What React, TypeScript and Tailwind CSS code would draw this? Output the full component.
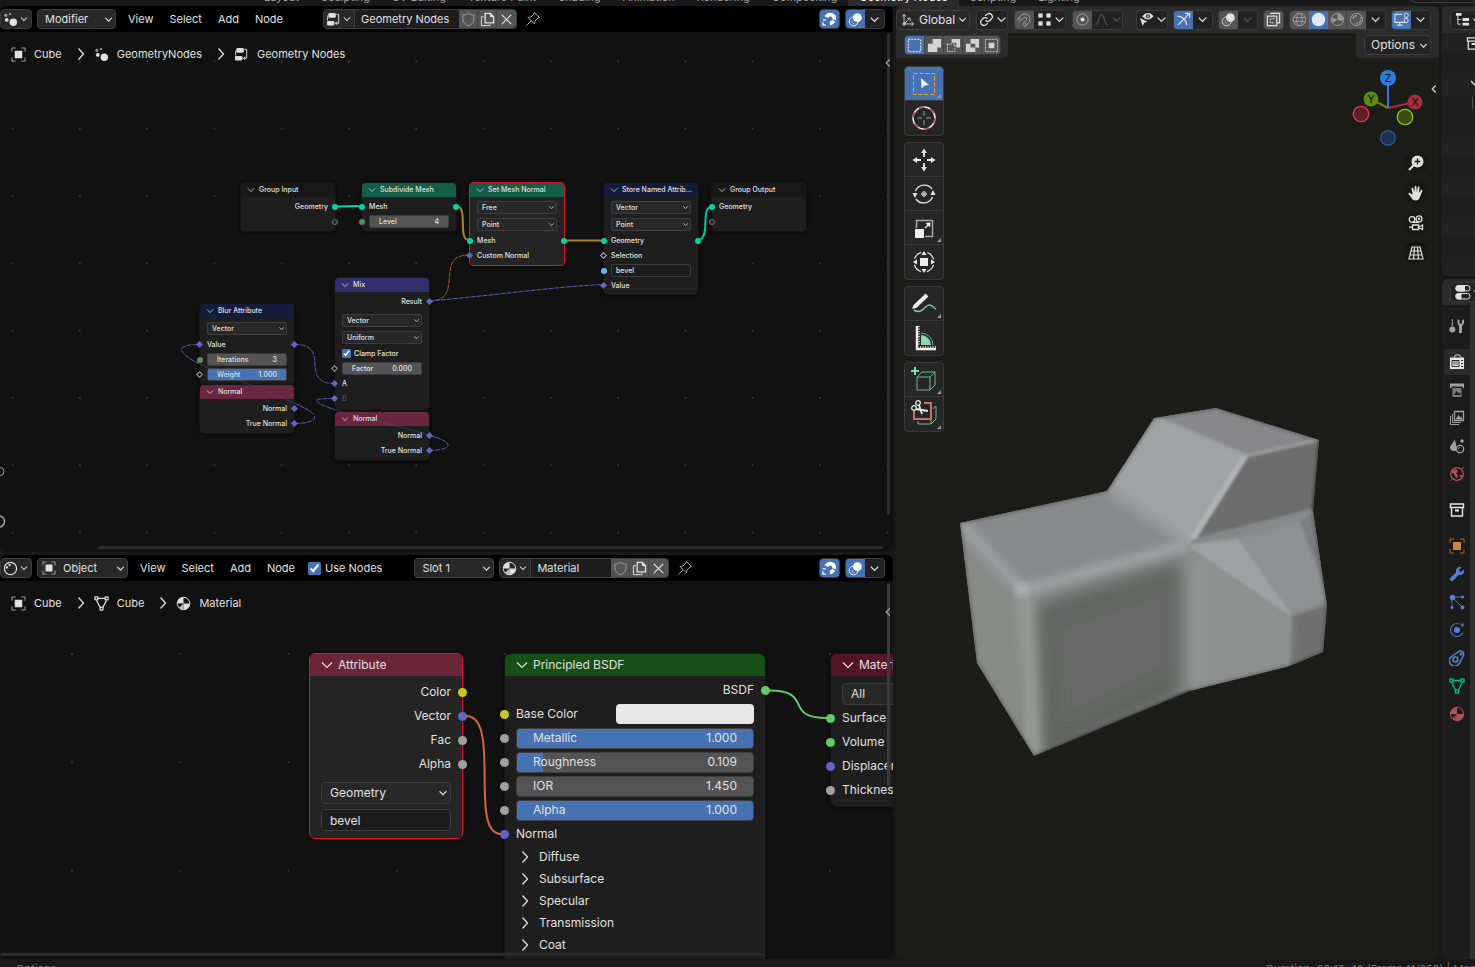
import { useState } from "react";
import clsx from "clsx";

const ICONS: Record<string, React.ReactNode> = {
  nodesMod: (
    <g fill="currentColor" stroke="none">
      <circle cx="11" cy="11" r="4" />
      <circle cx="3" cy="3.5" r="1.7" opacity="0.6" />
      <circle cx="7.5" cy="2" r="1.3" opacity="0.6" />
      <circle cx="4" cy="8.5" r="2" />
    </g>
  ),
  nodeTree: (
    <g>
      <rect x="2.5" y="1" width="8" height="5" rx="1.5" fill="currentColor" stroke="none" />
      <rect x="1" y="9.5" width="8" height="5" rx="1.5" fill="currentColor" stroke="none" />
      <path d="M2 3.5 1.5 9M11 2.5h2.5v9.5H10M12 10.5l-2 1.5 2 1.5" />
    </g>
  ),
  object: (
    <g>
      <rect x="4" y="4" width="8" height="8" fill="currentColor" stroke="none" />
      <path d="M1 5V1h4M11 1h4v4M15 11v4h-4M5 15H1v-4" opacity="0.7" />
    </g>
  ),
  meshData: (
    <g strokeWidth="1.3">
      <path d="M4 2.5h8M2.6 4.5 6.5 12M13.4 4.5 9.5 12" />
      <rect x="1" y="1" width="3" height="3" />
      <rect x="12" y="1" width="3" height="3" />
      <rect x="6.5" y="12" width="3" height="3" />
    </g>
  ),
  material: (
    <g>
      <circle cx="8" cy="8" r="6.7" />
      <path d="M8 8V1.3A6.7 6.7 0 0 0 1.3 8ZM8 8v6.7A6.7 6.7 0 0 0 14.7 8Z" fill="currentColor" stroke="none" />
      <path d="M8 14.7A6.7 6.7 0 0 1 3 12.5L8 8Z" fill="currentColor" stroke="none" opacity="0.8" />
    </g>
  ),
  shaderBall: (
    <g>
      <circle cx="8" cy="8" r="6.5" strokeWidth="1.3" />
      <path d="M4 8a4 4 0 0 1 .8-2.300M6 4.600 8 4" strokeWidth="2" />
    </g>
  ),
  shield: <path d="M8 1.500c2 1.300 4 1.700 6 1.700v4c0 4-3 6.200-6 7.500C5 13.400 2 11.200 2 7.200v-4c2 0 4-.4 6-1.700Z" />,
  copy: (
    <g>
      <path d="M5.500 1.500h5.500l3.500 3.500v6.500h-9Z" strokeWidth="1.4" />
      <path d="M11 1.500v3.500h3.500Z" fill="currentColor" />
      <path d="M4 5H1.500v9.500h9V13" />
    </g>
  ),
  close: <path d="m3 3 10 10M13 3 3 13" strokeWidth="1.3" />,
  pin: <path d="m9.500 1.500 5 5-1.500.5-3 3-.5 3L3 6.500l3-.5 3-3ZM6 10l-4.500 4.500" />,
  magnet: (
    <g>
      <path d="M4.500 5.500C7 1 13.500 2.500 13 7.500c-.3 3-3 5-6 5" strokeWidth="4" strokeDasharray="13 1.200 5" />
      <path d="M1 8.500h3M1 11v3h3" strokeWidth="1.3" />
    </g>
  ),
  overlay: (
    <g>
      <circle cx="10" cy="6" r="4.7" fill="currentColor" stroke="none" />
      <circle cx="6" cy="10" r="4.7" />
      <path d="M4 9a4 4 0 0 0 3 4" opacity="0.6" />
    </g>
  ),
  down: <path d="m4 6 4 4 4-4" strokeWidth="1.4" />,
  expand: <path d="m3 5.500 5 5 5-5" strokeWidth="1.2" />,
  right: <path d="m5.500 2.500 5 5.500-5 5.500" strokeWidth="1.3" />,
  axes: (
    <g>
      <path d="M3.500 2v10.500H14M3.500 12.500 9 7" />
      <path d="M1.500 4 3.500 1.500 5.500 4M12 10.500l2.500 2-2.500 2M7 6h3.500v3.500" />
      <circle cx="3.5" cy="12.5" r="1.5" />
    </g>
  ),
  link: (
    <g strokeWidth="1.4">
      <path d="M6.500 4 9 2.200a3.400 3.400 0 0 1 4.700 4.700l-2 2.200a3.300 3.300 0 0 1-4.700 0" />
      <path d="M9.500 12 7 13.800a3.400 3.400 0 0 1-4.700-4.700l2-2.200a3.300 3.300 0 0 1 4.700 0" />
    </g>
  ),
  magnetOff: (
    <g transform="rotate(45 8 8)">
      <path d="M2.500 13V7.500a5.500 5.500 0 0 1 11 0V13h-3.500V7.500a2 2 0 0 0-4 0V13ZM2.500 10.500H6M10 10.500h3.500" />
    </g>
  ),
  snapGrid: (
    <g fill="currentColor" stroke="none">
      <rect x="1.5" y="1.5" width="4.5" height="4.5" />
      <rect x="10" y="1.5" width="4.5" height="4.5" />
      <rect x="1.5" y="10" width="4.5" height="4.5" />
      <rect x="10" y="10" width="4.5" height="4.5" />
    </g>
  ),
  proportional: (
    <g>
      <circle cx="8" cy="8" r="6" opacity="0.6" />
      <circle cx="8" cy="8" r="2.2" fill="currentColor" stroke="none" />
    </g>
  ),
  falloff: <path d="M1.500 13.500c4 0 3.500-11 6.500-11s2.500 11 6.500 11" strokeWidth="1.3" />,
  eye: (
    <g>
      <path d="M4 4.500c3-4 8-4 11 0-3 4-8 4-11 0Z" fill="currentColor" />
      <circle cx="9.5" cy="4.5" r="2.2" fill="#222" stroke="none" />
      <circle cx="9.5" cy="4.5" r="1" fill="currentColor" stroke="none" />
      <path d="m1 6.500 8 4-3.500 1L4 15Z" fill="currentColor" stroke="none" />
    </g>
  ),
  gizmo: <path d="M1.500 4.500C7 4.500 11.500 9 11.500 14.500M2 14 14 2M9.500 1.500h5v5" strokeWidth="1.3" />,
  xray: (
    <g>
      <path d="M4.500 1.500h10v10h-3M1.500 4.500h10v10h-10Z" strokeWidth="1.3" />
      <path d="M4.500 7v4.500h4M8.500 7.500v-.500h-3" strokeDasharray="2 1" />
    </g>
  ),
  wire: (
    <g>
      <circle cx="8" cy="8" r="6.7" />
      <ellipse cx="8" cy="8" rx="3" ry="6.7" />
      <path d="M2 5.500c3 1 9 1 12 0M2 10.500c3-1 9-1 12 0" />
    </g>
  ),
  solid: <circle cx="8" cy="8" r="7.2" fill="currentColor" stroke="none" />,
  preview: (
    <g>
      <circle cx="8" cy="8" r="6.5" />
      <path d="M8 8V2a6 6 0 0 1 6 6c-1 2-4 2-6 0ZM8 8l-5 3.500A6 6 0 0 1 2.500 6Z" fill="currentColor" stroke="none" opacity="0.9" />
    </g>
  ),
  rendered: (
    <g>
      <circle cx="8" cy="8" r="6.5" />
      <path d="M4.500 7.500a4 4 0 0 1 4-3.500" strokeWidth="1.5" />
      <path d="M12.500 6c1 4-2 7-6 6.500" strokeDasharray="1.500 1" strokeWidth="2" />
    </g>
  ),
  display: (
    <g>
      <path d="M8.500 2.500H1v8.500h10V9M6 11v3M3 14h6" strokeWidth="1.2" />
      <rect x="11" y="1" width="4" height="5" rx="2" />
      <rect x="11" y="6.5" width="4" height="5" rx="2" />
    </g>
  ),
  outliner: (
    <g>
      <path d="M3 3v10h3M3 8h3" />
      <path d="M1 1h6v3H1ZM8 6.500h7v3H8ZM8 11.500h7v3H8Z" fill="currentColor" stroke="none" />
    </g>
  ),
  props: (
    <g>
      <rect x="1" y="1.5" width="14" height="5.5" rx="2.5" />
      <rect x="1" y="9.5" width="14" height="5.5" rx="2.5" />
      <path d="M3.500 1.500h6v5.500h-6a2.700 2.700 0 0 1 0-5.500ZM3.500 9.500h2.500v5.500h-2.500a2.700 2.700 0 0 1 0-5.500Z" fill="currentColor" />
    </g>
  ),
  collection: (
    <g>
      <path d="M1.500 2h13v3.500h-13ZM2.500 5.500v8.500h11V5.500" strokeWidth="1.4" />
      <path d="M6 8.500h4" strokeWidth="2" />
    </g>
  ),
  tools: (
    <g fill="currentColor" stroke="none">
      <path d="M2.800 1h1v7h-1Z" />
      <circle cx="3.3" cy="11.5" r="3" />
      <path d="M8.500 1v3.500c0 2 1.500 3 1.500 4V15h3V8.500c0-1 2-2 2-4V1l-2 1.500v3h-2.500v-3Z" />
    </g>
  ),
  render: (
    <g>
      <path d="M5 3.500 6.500 1h4L12 3.500" />
      <path d="M1 3.500h14V15H1Z" fill="currentColor" stroke="none" />
      <path d="M3 6.500h7v6H3Z" stroke="#2b2b2b" />
      <path d="M4 8h5M4 10h5" stroke="#2b2b2b" strokeWidth="0.8" />
      <path d="M12 6.500h2M12 9.500h2M12 12.500h2" stroke="#2b2b2b" />
    </g>
  ),
  output: (
    <g fill="currentColor" stroke="none">
      <path d="M1 1.500h14V6h-1.500V4.500h-11V6H1Z" />
      <path d="M3.500 6h9v9h-9Z" opacity="0.7" />
      <path d="m5 13 2.500-4 2 2.500 1-1L12 13Z" fill="#1c1c1c" />
    </g>
  ),
  viewLayer: (
    <g>
      <path d="M5.500 1.500h9v9h-9Z" strokeWidth="1.3" />
      <path d="m6.500 9.500 3-4.500 2 2.500 1-1 1 3Z" fill="currentColor" stroke="none" />
      <path d="M3.500 4v8.500H12M1.500 6v8.500H10" />
    </g>
  ),
  scene: (
    <g>
      <path d="M5.500 1c0 3-4.500 6-4.500 9 0 4 9 4 7 0-.5-2-1-2-1-4Z" fill="currentColor" stroke="none" />
      <circle cx="11" cy="11" r="3.7" fill="#1c1c1c" strokeWidth="1.3" />
      <circle cx="13" cy="3" r="1.8" fill="currentColor" stroke="none" />
      <path d="M9.500 11a1.500 1.500 0 0 1 1.500-1.500" />
    </g>
  ),
  world: (
    <g>
      <circle cx="8" cy="8" r="6.3" strokeWidth="1.3" />
      <path d="M3 4.500 7 3l2 2-2 2.500 2 1.500-1 3.500-2-2-1-3-3-1ZM10.500 9l3 0-2 3Z" fill="currentColor" stroke="none" />
      <path d="M12.500 3.500 15 1M3.500 12.500 1 15" />
    </g>
  ),
  wrench: (
    <path
      d="M14.800 3.500 12 6.300 9.700 4 12.500 1.200C9 0 6 3 7.200 6.400L1.200 12a2 2 0 0 0 2.800 2.800l5.800-6C13 10 16 7 14.800 3.500Z"
      fill="currentColor"
      stroke="none"
    />
  ),
  particles: (
    <g>
      <path d="M4 3h10M3 4v9M5 5l8 8" opacity="0.8" />
      <g fill="currentColor" stroke="none">
        <circle cx="3.5" cy="3.5" r="2.8" />
        <circle cx="13.5" cy="3" r="1.5" />
        <circle cx="3" cy="13.5" r="1.5" />
        <circle cx="13.5" cy="13.5" r="1.9" />
      </g>
    </g>
  ),
  physics: (
    <g>
      <circle cx="8" cy="8" r="3" fill="currentColor" stroke="none" />
      <path d="M10.500 2A6.500 6.500 0 1 0 14 10.500" opacity="0.8" strokeWidth="1.2" />
      <circle cx="13.5" cy="3" r="1.8" fill="currentColor" stroke="none" opacity="0.7" />
    </g>
  ),
  constraint: (
    <g strokeWidth="1.5">
      <circle cx="6.5" cy="9.5" r="2.5" />
      <path d="M2 7 9 2c4-2.500 7 1 5 4.500l-3.500 6.500A5.300 5.300 0 1 1 2 7Z" />
      <circle cx="12" cy="4" r="0.8" fill="currentColor" />
    </g>
  ),
  zoom: (
    <g>
      <circle cx="9.5" cy="6.5" r="6" fill="currentColor" stroke="none" />
      <path d="m1 15 5-5" strokeWidth="2.2" />
      <path d="M9.500 3.500v6M6.500 6.500h6" stroke="#171714" strokeWidth="1.3" />
    </g>
  ),
  hand: (
    <path
      d="M4.500 8.500 3.500 3.700c-.2-1.200 1.300-1.500 1.700-.4L6.500 7 6.700 1.800c0-1.300 1.700-1.300 1.800 0L8.800 7l1-4.700c.3-1.200 1.800-.9 1.700.3L11 8l1.700-2.700c.7-1 2-.3 1.600.8L12 12c-1 2.500-2 3.500-4.500 3.500S4 14 3.300 12.500L.7 9.300c-.8-1 .5-2.200 1.500-1.300L4 9.800Z"
      fill="currentColor"
      stroke="none"
    />
  ),
  camera: (
    <g strokeWidth="1.3">
      <circle cx="4" cy="4.5" r="2.8" />
      <circle cx="11" cy="3.8" r="3" />
      <circle cx="11" cy="3.8" r="0.6" fill="currentColor" />
      <path d="M4 7.300h7" />
      <path d="M4.500 10h6v4.500h-6ZM10.500 12l4-2v4.500l-4-2M1 12.200h3.500" />
    </g>
  ),
  gridView: <path d="M4 2h8l3 12H1ZM3 6h10M2 10h12M6.500 2 5.500 14M9.500 2l1 12" strokeWidth="1.2" />,
  selNew: <path d="M1.500 1.500h13v13h-13Z" strokeDasharray="2 1.250" strokeWidth="1.4" />,
  selAdd: <path d="M6 1h9v9h-4v5H1V6h5Z" fill="currentColor" stroke="none" />,
  selSub: (
    <g>
      <path d="M6 1h9v9h-4V5H6Z" fill="currentColor" stroke="none" />
      <path d="M1.500 6.500h8v8h-8Z" strokeDasharray="2 1" />
    </g>
  ),
  selXor: <path fillRule="evenodd" d="M6 1h9v9h-4v5H1V6h5ZM6 6h5v4H6Z" fill="currentColor" stroke="none" />,
  selAnd: (
    <g>
      <path d="M5 5h6v6H5Z" fill="currentColor" stroke="none" />
      <path d="M1.500 1.500h13v13h-13Z" strokeDasharray="2 1.250" />
    </g>
  ),
};

function Icon({ name, className = "size-4" }: { name: string; className?: string }) {
  return (
    <svg viewBox="0 0 16 16" className={clsx("shrink-0", className)} fill="none" stroke="currentColor" strokeWidth="1" aria-hidden="true">
      {ICONS[name]}
    </svg>
  );
}

function Btn({ icon, label, className }: { icon: string; label: string; className?: string }) {
  return (
    <button aria-label={label} className={clsx("flex h-full w-[19px] items-center justify-center", className)}>
      <Icon name={icon} className="size-[15px]" />
    </button>
  );
}

function Group({ children, className }: { children: React.ReactNode; className?: string }) {
  return (
    <div className={clsx("flex h-5 shrink-0 items-center overflow-hidden rounded border border-[#3a3a3a] bg-[#222]", className)}>
      {children}
    </div>
  );
}

function HeaderSelect({ label, options, icon, className }: { label: string; options: string[]; icon?: string; className?: string }) {
  return (
    <div className={clsx("relative flex h-5 shrink-0 items-center rounded border border-[#3d3d3d] bg-[#282828]", className)}>
      {icon && <Icon name={icon} className="ml-1 size-[14px]" />}
      <select aria-label={label} className={clsx("h-full min-w-0 flex-1 appearance-none bg-transparent outline-none", icon === "axes" ? "pl-1" : "pl-[7px]")}>
        {options.map((o) => (
          <option key={o}>{o}</option>
        ))}
      </select>
      <Icon name="down" className="pointer-events-none absolute right-0 size-[13px]" />
    </div>
  );
}

function Menus() {
  return (
    <nav className="flex gap-4">
      {["View", "Select", "Add", "Node"].map((m) => (
        <button key={m}>{m}</button>
      ))}
    </nav>
  );
}

function EditorType({ icon }: { icon: string }) {
  return (
    <button aria-label="Editor type" className="flex h-5 w-8 shrink-0 items-center justify-center rounded border border-[#3a3a3a] bg-[#282828]">
      <Icon name={icon} className="size-[15px]" />
      <Icon name="down" className="size-3" />
    </button>
  );
}

function DataBlock({ icon, name, width }: { icon: string; name: string; width: string }) {
  return (
    <div className="flex items-center gap-2">
      <Group className="border-[#3d3d3d]">
        <button aria-label="Browse" className="flex h-full w-[31px] items-center justify-center border-r border-[#3d3d3d] bg-[#282828]">
          <Icon name={icon} className="size-[15px]" />
          <Icon name="down" className="size-3" />
        </button>
        <input aria-label="Name" defaultValue={name} className={clsx("h-full bg-[#1d1d1d] px-[6px] outline-none", width)} />
        <Btn icon="shield" label="Fake user" className="border-r border-[#444] bg-[#545454] text-neutral-400" />
        <Btn icon="copy" label="Duplicate" className="border-r border-[#444] bg-[#545454]" />
        <Btn icon="close" label="Unlink" className="bg-[#545454]" />
      </Group>
      <button aria-label="Pin" className="text-neutral-400">
        <Icon name="pin" className="size-4" />
      </button>
    </div>
  );
}

function HeaderToggles() {
  return (
    <div className="ml-auto flex gap-[5px] pr-[8px]">
      <Group>
        <Btn icon="magnet" label="Snap" className="bg-[#4772b3] text-white" />
      </Group>
      <Group>
        <Btn icon="overlay" label="Overlays" className="bg-[#4772b3] text-white" />
        <Btn icon="down" label="Overlay options" />
      </Group>
    </div>
  );
}

function Crumbs({ items }: { items: { icon: string; text: string }[] }) {
  return (
    <nav className="relative flex h-11 items-center px-[11px] text-[11px]">
      {items.map((it, i) => (
        <div key={i} className="flex items-center">
          {i > 0 && <Icon name="right" className="mr-[5px] ml-[11px] size-4" />}
          <Icon name={it.icon} className="size-[15px]" />
          <a href="#" className="ml-2">
            {it.text}
          </a>
        </div>
      ))}
    </nav>
  );
}

// ---- nodes ----

type NodeProps = {
  title: string;
  head: string;
  className: string;
  big?: boolean;
  selected?: boolean;
  children: React.ReactNode;
};

function NodeCard({ title, head, className, big, selected, children }: NodeProps) {
  return (
    <section
      className={clsx(
        "absolute shadow-[0_1px_4px_#000] outline-1",
        big ? "rounded-[5px] text-xs" : "rounded-[3px] text-[7px] font-medium",
        selected ? "bg-[#242424] outline-[#e0112b]" : "bg-[#1e1e1e] outline-[#141414]",
        className
      )}
    >
      <h3
        className={clsx(
          "flex items-center whitespace-nowrap",
          big ? "h-[22px] gap-[3px] rounded-t-[5px] pl-[9px]" : "h-[14px] gap-[3px] rounded-t-[3px] pl-[5px]",
          head
        )}
      >
        <Icon name="expand" className={big ? "size-4" : "size-[10px]"} />
        {title}
      </h3>
      {children}
    </section>
  );
}

type RowProps = {
  left?: string;
  right?: string;
  leftDiamond?: boolean;
  rightDiamond?: boolean;
  big?: boolean;
  align?: "left" | "right";
  drop?: boolean;
  children?: React.ReactNode;
};

function Row({ left, right, leftDiamond, rightDiamond, big, align = "left", drop, children }: RowProps) {
  const dot = big ? "size-[9px] rounded-full" : "size-[6px] rounded-full";
  const diamond = "size-[5px] rotate-45";
  return (
    <div
      className={clsx(
        "relative flex items-center",
        big ? "h-6 px-[11px]" : drop ? "h-[17px] px-[7px]" : "h-[15px] px-[7px]",
        align === "right" && "justify-end"
      )}
    >
      {left && <i className={clsx("absolute", big ? "-left-[5px]" : "-left-[3px]", leftDiamond ? diamond : dot, left)} />}
      {children}
      {right && <i className={clsx("absolute", big ? "-right-[5px]" : "-right-[3px]", rightDiamond ? diamond : dot, right)} />}
    </div>
  );
}

function NodeSelect({ options, big }: { options: string[]; big?: boolean }) {
  return (
    <div className={clsx("relative flex w-full items-center border border-[#3d3d3d] bg-[#282828]", big ? "h-[22px] rounded" : "h-[13px] rounded-[2px]")}>
      <select aria-label={options[0]} className={clsx("h-full w-full appearance-none bg-transparent outline-none", big ? "pl-2" : "pl-1")}>
        {options.map((o) => (
          <option key={o}>{o}</option>
        ))}
      </select>
      <Icon name="down" className={clsx("pointer-events-none absolute right-0", big ? "size-[14px]" : "size-[9px]")} />
    </div>
  );
}

function NumField({ label, value, fill = 0, big }: { label: string; value: string; fill?: number; big?: boolean }) {
  return (
    <label className={clsx("relative flex w-full items-center overflow-hidden bg-[#545454]", big ? "h-[21px] rounded border border-[#3d3d3d] px-4" : "h-[13px] rounded-[2px] border border-[#3d3d3d] px-[9px]")}>
      <span className="absolute inset-y-0 left-0 bg-[#4772b3]" style={{ width: `${fill}%` }} />
      <span className="relative">{label}</span>
      <input defaultValue={value} className="relative w-0 min-w-0 flex-1 bg-transparent text-right outline-none" />
    </label>
  );
}

const TEAL = "bg-[#00d6a3]";
const PURPLE = "bg-[#6363c7]";
const GREY = "bg-[#a1a1a1]";
const GREEN = "bg-[#63c763]";

function Dots({ id, step, x, y }: { id: string; step: number; x: number; y: number }) {
  return (
    <svg className="absolute inset-0 size-full" aria-hidden="true">
      <pattern id={id} width={step} height={step} x={x} y={y} patternUnits="userSpaceOnUse">
        <circle cx="1" cy="1" r="1" fill="#22406e" />
      </pattern>
      <rect width="100%" height="100%" fill={`url(#${id})`} />
    </svg>
  );
}

function GeometryCanvas() {
  return (
    <div className="relative min-h-0 flex-1 overflow-hidden bg-[#111]">
      <Dots id="geoDots" step={67.3} x={11.5} y={28.5} />
      <Crumbs
        items={[
          { icon: "object", text: "Cube" },
          { icon: "nodesMod", text: "GeometryNodes" },
          { icon: "nodeTree", text: "Geometry Nodes" },
        ]}
      />
      <svg className="absolute top-0 left-0 h-[520px] w-[890px]" viewBox="0 32 890 520" fill="none" aria-hidden="true">
        <path d="M335 206.500L362 206" stroke="#00d6a3" strokeWidth="2" />
        <path d="M456 206C469 206 457 240 469 240" stroke="#a8842c" strokeWidth="2" />
        <path d="M564 240.500H604" stroke="#a8842c" strokeWidth="2" />
        <path d="M698 240C711 240 700 206.500 712 206.500" stroke="#00c89a" strokeWidth="2" />
        <path d="M429 301C466 301 433 255 469 255" stroke="#b0593a" strokeDasharray="5 1" />
        <g stroke="#5c5cb8" strokeDasharray="5 1">
          <path d="M429 301C480 297 560 286 604 284.500" />
          <path d="M295 344.500C332 344.500 298 383.500 335 383.500" />
          <path d="M295 423.500C312 423.500 322 418 308 410C295 401 200 366 192 360C178 351 176 344.500 200 344.500" />
          <path d="M429 450.500C446 450.500 456 445 440 439C425 432 345 414 330 408C310 400 312 398.500 335 398.500" />
        </g>
        <g stroke="#a0a0a0">
          <circle cx="0" cy="471.5" r="4" />
          <circle cx="-1" cy="521.5" r="5.5" strokeWidth="1.5" />
        </g>
      </svg>

      <NodeCard title="Group Input" head="bg-[#181818]" className="top-[151px] left-[241px] w-[94px] pb-0.5">
        <div className="pt-0.5">
          <Row align="right" right={TEAL}>Geometry</Row>
          <Row right="border border-[#777] bg-[#222]" />
        </div>
      </NodeCard>
      <NodeCard title="Subdivide Mesh" head="bg-[#135d49]" className="top-[151px] left-[362px] w-[94px] pb-0.5">
        <div className="pt-0.5">
          <Row left={TEAL} right={TEAL}>Mesh</Row>
          <Row left="bg-[#598c5c]"><NumField label="Level" value="4" /></Row>
        </div>
      </NodeCard>
      <NodeCard selected title="Set Mesh Normal" head="bg-[#135d49]" className="top-[151px] left-[470px] w-[94px] pb-0.5">
        <div className="pt-0.5">
          <Row drop><NodeSelect options={["Free", "Sharpness"]} /></Row>
          <Row drop><NodeSelect options={["Point", "Face"]} /></Row>
          <Row left={TEAL} right={TEAL}>Mesh</Row>
          <Row left={PURPLE} leftDiamond>Custom Normal</Row>
        </div>
      </NodeCard>
      <NodeCard title="Store Named Attrib..." head="bg-[#141c3c]" className="top-[151px] left-[604px] w-[94px] pb-px">
        <div className="pt-0.5">
          <Row drop><NodeSelect options={["Vector", "Float"]} /></Row>
          <Row drop><NodeSelect options={["Point", "Face"]} /></Row>
          <Row left={TEAL} right={TEAL}>Geometry</Row>
          <Row left="border border-[#cca6d6] bg-[#111]" leftDiamond>Selection</Row>
          <Row left="bg-[#70b2ff]">
            <input aria-label="Attribute name" defaultValue="bevel" className="h-[13px] w-full rounded-[2px] border border-[#3d3d3d] bg-[#1d1d1d] px-1 outline-none" />
          </Row>
          <Row left={PURPLE} leftDiamond>Value</Row>
        </div>
      </NodeCard>
      <NodeCard title="Group Output" head="bg-[#181818]" className="top-[151px] left-[712px] w-[94px] pb-0.5">
        <div className="pt-0.5">
          <Row left={TEAL}>Geometry</Row>
          <Row left="border border-[#777] bg-[#222]" />
        </div>
      </NodeCard>
      <NodeCard title="Mix" head="bg-[#2f2f6b]" className="top-[246px] left-[335px] w-[94px] pb-1">
        <div className="pt-0.5">
          <Row align="right" right={PURPLE} rightDiamond>Result</Row>
          <div className="pt-[3px]">
            <Row drop><NodeSelect options={["Vector", "Float"]} /></Row>
            <Row drop><NodeSelect options={["Uniform", "Non-Uniform"]} /></Row>
          </div>
          <Row>
            <label className="flex items-center gap-[3px]">
              <input type="checkbox" defaultChecked className="size-[9px] accent-[#4772b3]" />
              Clamp Factor
            </label>
          </Row>
          <Row left="border border-[#a1a1a1] bg-[#111]" leftDiamond><NumField label="Factor" value="0.000" /></Row>
          <Row left={PURPLE} leftDiamond>A</Row>
          <Row left={PURPLE} leftDiamond><span className="text-neutral-600">B</span></Row>
        </div>
      </NodeCard>
      <NodeCard title="Normal" head="bg-[#6a2540]" className="top-[380px] left-[335px] w-[94px] pb-0.5">
        <div className="pt-0.5">
          <Row align="right" right={PURPLE} rightDiamond>Normal</Row>
          <Row align="right" right={PURPLE} rightDiamond>True Normal</Row>
        </div>
      </NodeCard>
      <NodeCard title="Blur Attribute" head="bg-[#141c3c]" className="top-[272px] left-[200px] w-[94px] pb-0.5">
        <div className="pt-0.5">
          <Row drop><NodeSelect options={["Vector", "Float"]} /></Row>
          <Row left={PURPLE} leftDiamond right={PURPLE} rightDiamond>Value</Row>
          <Row left="bg-[#598c5c]"><NumField label="Iterations" value="3" /></Row>
          <Row left="border border-[#a1a1a1] bg-[#111]" leftDiamond><NumField label="Weight" value="1.000" fill={100} /></Row>
        </div>
      </NodeCard>
      <NodeCard title="Normal" head="bg-[#6a2540]" className="top-[353px] left-[200px] w-[94px] pb-0.5">
        <div className="pt-0.5">
          <Row align="right" right={PURPLE} rightDiamond>Normal</Row>
          <Row align="right" right={PURPLE} rightDiamond>True Normal</Row>
        </div>
      </NodeCard>
      {/* wires showing faintly through the nodes they cross */}
      <svg
        className="pointer-events-none absolute top-0 left-0 h-[520px] w-[890px]"
        viewBox="0 32 890 520"
        fill="none"
        stroke="#5c5cb8"
        opacity="0.3"
        aria-hidden="true"
      >
        <path d="M308 410C295 401 200 366 192 360M440 439C425 432 345 414 330 408" />
      </svg>

      <div className="absolute top-px right-[3px] h-[482px] w-[3px] rounded bg-[#2c2c2c]" />
      <div className="absolute right-[10px] bottom-[3px] left-[98px] h-[3px] rounded bg-[#2c2c2c]" />
      <Icon name="down" className="absolute top-6 -right-0.5 size-[14px] rotate-90 text-neutral-400" />
    </div>
  );
}

const PANELS = ["Diffuse", "Subsurface", "Specular", "Transmission", "Coat"];

function ShaderCanvas() {
  return (
    <div className="relative min-h-0 flex-1 overflow-hidden bg-[#111]">
      <Dots id="shaderDots" step={108.3} x={71} y={72} />
      <Crumbs
        items={[
          { icon: "object", text: "Cube" },
          { icon: "meshData", text: "Cube" },
          { icon: "material", text: "Material" },
        ]}
      />
      <NodeCard big selected title="Attribute" head="bg-[#6b2539]" className="top-[73px] left-[310px] w-[152px] pb-[5px]">
        <div className="pt-1">
          <Row big align="right" right="bg-[#c7c729]">Color</Row>
          <Row big align="right" right={PURPLE}>Vector</Row>
          <Row big align="right" right={GREY}>Fac</Row>
          <Row big align="right" right={GREY}>Alpha</Row>
        </div>
        <div className="flex flex-col gap-[5px] px-[11px] pt-1.5 pb-0.5">
          <NodeSelect big options={["Geometry", "Object"]} />
          <input aria-label="Attribute name" defaultValue="bevel" className="h-[22px] rounded border border-[#3d3d3d] bg-[#1d1d1d] px-2 outline-none" />
        </div>
      </NodeCard>
      <NodeCard big title="Principled BSDF" head="bg-[#154f15]" className="top-[73px] left-[505px] w-[260px] pb-10">
        <div className="pt-0.5">
          <Row big align="right" right={GREEN}>BSDF</Row>
          <Row big left="bg-[#c7c729]">
            <span className="flex-1">Base Color</span>
            <button aria-label="Base Color" className="h-5 w-[138px] rounded bg-[#e7e7e7]" />
          </Row>
          <Row big left={GREY}><NumField big label="Metallic" value="1.000" fill={100} /></Row>
          <Row big left={GREY}><NumField big label="Roughness" value="0.109" fill={10.9} /></Row>
          <Row big left={GREY}><NumField big label="IOR" value="1.450" /></Row>
          <Row big left={GREY}><NumField big label="Alpha" value="1.000" fill={100} /></Row>
          <Row big left={PURPLE}>Normal</Row>
        </div>
        {PANELS.map((p) => (
          <button key={p} className="flex h-[22px] w-full items-center gap-[6px] pl-3">
            <Icon name="right" className="size-4" />
            {p}
          </button>
        ))}
      </NodeCard>
      <NodeCard big title="Material Output" head="bg-[#531524]" className="top-[73px] left-[831px] w-[150px] pb-1">
        <div className="pt-[6px]">
          <Row big><NodeSelect big options={["All", "Eevee", "Cycles"]} /></Row>
          <Row big left={GREEN}>Surface</Row>
          <Row big left={GREEN}>Volume</Row>
          <Row big left={PURPLE}>Displacement</Row>
          <Row big left={GREY}>Thickness</Row>
        </div>
      </NodeCard>
      <svg
        className="pointer-events-none absolute top-0 left-0 h-[380px] w-[890px]"
        viewBox="0 581 890 380"
        fill="none"
        strokeWidth="2"
        aria-hidden="true"
      >
        <path d="M466 716C502 716 468 834 501 834" stroke="#cc6a3e" />
        <path d="M769 690.500C815 690.500 782 718 827 718" stroke="#63c763" />
      </svg>
      <div className="absolute top-0.5 right-[3px] h-[203px] w-[3px] rounded bg-[#3a3a3a]" />
      <div className="absolute right-[128px] bottom-[3px] left-0 h-[3px] rounded bg-[#2c2c2c]" />
      <Icon name="down" className="absolute top-6 -right-0.5 size-[14px] rotate-90 text-neutral-400" />
    </div>
  );
}

// ---- 3D viewport ----

const SILHOUETTE = "1154,418 1216,408 1319,440 1313,511 1327,606 1323,652 1287,667 1190,691 1034,756 977,663 960,523 1107,491";

function BevelMesh() {
  return (
    <svg className="absolute top-[396px] left-[59px] h-[356px] w-[376px]" viewBox="955 402 376 356" role="img" aria-label="Bevelled cube mesh">
      <defs>
        <clipPath id="meshClip">
          <polygon points={SILHOUETTE} />
        </clipPath>
        <filter id="soft" x="-20%" y="-20%" width="140%" height="140%">
          <feGaussianBlur stdDeviation="5" />
        </filter>
        <filter id="softer" x="-20%" y="-20%" width="140%" height="140%">
          <feGaussianBlur stdDeviation="9" />
        </filter>
        <filter id="fine" x="-20%" y="-20%" width="140%" height="140%">
          <feGaussianBlur stdDeviation="1.5" />
        </filter>
      </defs>
      <g clipPath="url(#meshClip)">
        <polygon points={SILHOUETTE} fill="#8e908f" />
        <g filter="url(#fine)">
          <polygon points="1150,410 1216,400 1325,438 1246,455" fill="#88888a" />
          <polygon points="1154,416 1246,456 1190,544 1100,493" fill="#a0a2a3" />
          <polygon points="1246,456 1325,438 1318,511 1190,544" fill="#6c6d6c" />
          <polygon points="1190,544 1314,510 1300,525 1238,541" fill="#88898b" />
          <polygon points="1190,544 1238,539 1292,615" fill="#9fa0a2" />
          <polygon points="1238,539 1300,522 1330,604 1292,615" fill="#8f9092" />
          <polygon points="1300,522 1318,508 1332,606" fill="#7c7e83" />
          <polygon points="1292,615 1330,602 1326,656 1290,670" fill="#6f706f" />
        </g>
        <g filter="url(#soft)">
          <polygon points="955,518 1107,486 1188,544 1022,590" fill="#88898b" />
          <polygon points="955,523 1022,590 1034,762 970,665" fill="#888a88" />
        </g>
        <g filter="url(#softer)">
          <polygon points="1036,604 1182,560 1182,695 1042,764" fill="#616261" />
          <polygon points="1052,622 1172,580 1172,672 1056,730" fill="#686968" />
        </g>
        <g filter="url(#soft)" fill="none">
          <path d="M960 523 1022 590 1190 544" stroke="#a3a5a6" strokeWidth="9" />
          <path d="M1024 590 1034 756" stroke="#999b99" strokeWidth="12" />
          <path d="M1109 491 1190 544" stroke="#9a9b9c" strokeWidth="8" />
          <path d="M1197 565V690" stroke="#929493" strokeWidth="9" />
          <path d="M1290 620V662" stroke="#8b8d8c" strokeWidth="4" />
        </g>
        <g filter="url(#fine)" fill="none" strokeLinecap="round">
          <path d="M1244 458 1192 540" stroke="#b2b4b5" strokeWidth="6" />
          <path d="M1156 419 1246 456 1318 440" stroke="#a0a1a3" strokeWidth="3" />
          <path d="M1192 541 1312 511" stroke="#8b8c8d" strokeWidth="4" />
          <path d="M1192 546 1288 612" stroke="#a2a3a4" strokeWidth="3" />
          <path d="M1292 615 1327 603" stroke="#8f9091" strokeWidth="2" />
        </g>
        <circle cx="1022" cy="590" r="6" fill="#b6b7b8" filter="url(#soft)" />
        <g filter="url(#fine)" fill="none" stroke="#232323">
          <path d="M1044 756 1192 692" strokeWidth="6" opacity="0.7" />
          <path d="M1322 440 1315 510" strokeWidth="6" opacity="0.6" />
          <polygon points={SILHOUETTE} strokeWidth="2" opacity="0.5" />
        </g>
      </g>
    </svg>
  );
}

function AxisGizmo() {
  return (
    <svg className="absolute top-[60px] right-[10px] h-[84px] w-[80px]" viewBox="1349 66 80 84" aria-hidden="true">
      <path d="M1388 108 1371 99" stroke="#5f8a12" strokeWidth="2" />
      <path d="M1388 108 1415 102" stroke="#ab2b40" strokeWidth="2" />
      <path d="M1388 108V78" stroke="#2b7de0" strokeWidth="2" />
      <circle cx="1371" cy="99" r="7.5" fill="#5f8a12" />
      <circle cx="1415" cy="102" r="7.5" fill="#ab2b40" />
      <circle cx="1361" cy="114" r="7.7" fill="#5b2028" stroke="#e8344e" strokeWidth="1.3" />
      <circle cx="1405" cy="117" r="7.7" fill="#3b4b1a" stroke="#86c80f" strokeWidth="1.3" />
      <circle cx="1388" cy="138" r="7.2" fill="#1f3048" stroke="#2b63a8" strokeWidth="1.3" />
      <circle cx="1388" cy="78" r="8" fill="#2b7de0" />
      <g fontSize="11" fontWeight="500" fontFamily="Inter, sans-serif" textAnchor="middle" fill="#1a1a1a">
        <text x="1388" y="82">Z</text>
        <text x="1371" y="103">Y</text>
        <text x="1415" y="106">X</text>
      </g>
    </svg>
  );
}

const TOOLS: Record<string, React.ReactNode> = {
  Select: (
    <g>
      <rect x="1.5" y="1.5" width="21" height="21" stroke="#f5a623" strokeDasharray="4 2" />
      <path d="m9 6 8 7-4 .5-3.500 3Z" fill="#eee" stroke="none" />
    </g>
  ),
  Cursor: (
    <g>
      <circle cx="12" cy="12" r="11" stroke="#eee" strokeWidth="1.5" />
      <circle cx="12" cy="12" r="11" stroke="#b5474f" strokeWidth="1.5" strokeDasharray="5.760 5.760" />
      <path d="M12 5v5M12 14v5M5 12h5M14 12h5" stroke="#999" />
    </g>
  ),
  Move: (
    <g>
      <path d="M12 5v4M12 15v4M5 12h4M15 12h4" strokeWidth="1.8" />
      <path d="m12 .500 3 4.500H9ZM12 23.500 9 19h6ZM.500 12 5 9v6ZM23.500 12 19 15V9Z" fill="#e6e6e6" stroke="none" />
    </g>
  ),
  Rotate: (
    <g>
      <path d="M3.500 9A9.500 9.500 0 0 1 20 7M20.500 15A9.500 9.500 0 0 1 4 17" strokeWidth="1.3" />
      <path d="M.500 11h5L3 16ZM18.500 13h5L21 8Z" fill="#e6e6e6" stroke="none" />
      <path d="m12 9 3 3-3 3L9 12Z" fill="#aaa" stroke="#aaa" />
    </g>
  ),
  Scale: (
    <g>
      <path d="M4.500 12V4.500h16v16H13" stroke="#aaa" strokeWidth="1.5" />
      <path d="M3 13h9v9H3Z" fill="#eee" stroke="none" />
      <path d="m13 12 4-4" strokeWidth="1.5" />
      <path d="m18.500 6.500-.5 5-4.500-4.500Z" fill="#eee" stroke="none" />
    </g>
  ),
  Transform: (
    <g>
      <circle cx="12" cy="12" r="10" strokeWidth="1.2" strokeDasharray="9.700 6" strokeDashoffset="-3" />
      <path d="M8 8h8v8H8Z" fill="#eee" stroke="none" />
      <path d="m12 1 2.500 4h-5ZM12 23l-2.500-4h5ZM1 12l4-2.500v5ZM23 12l-4 2.500v-5Z" fill="#eee" stroke="none" />
    </g>
  ),
  Annotate: (
    <g>
      <path d="M2 18c8 5 11-5 15-5s4 3 7 4" stroke="#7cc9a0" strokeWidth="1.5" />
      <path d="M3.500 14 15 3" stroke="#eee" strokeWidth="4" />
      <path d="m0 17 2-5 3.500 3.500Z" fill="#eee" stroke="none" />
    </g>
  ),
  Measure: (
    <g>
      <path d="M9 9a10 10 0 0 1 10 10H9Z" fill="#8fd8b0" stroke="none" />
      <path d="M9 7a12 12 0 0 1 12 12" stroke="#5fae86" />
      <path d="M5 0v23h19" stroke="#eee" strokeWidth="2.500" />
      <path d="M7 0v20M8 21h16" stroke="#eee" strokeWidth="1.5" strokeDasharray="1 1.500" />
    </g>
  ),
  "Add Cube": (
    <g stroke="#6fb58e">
      <path d="M5 9h13v13H5ZM5 9l5-5h13v13l-5 5M18 9l5-5" />
      <path d="M3-1v8M-1 3h8" stroke="#7fe0a8" strokeWidth="2" />
    </g>
  ),
  Knife: (
    <g>
      <path d="M6 22h13V9M24 4v13l-5 5M6 22v-3M21 7l3-3" stroke="#6fb58e" />
      <path d="M12 1h7v16H2V9" stroke="#c9706a" strokeWidth="2" />
      <circle cx="6" cy="1" r="2.3" strokeWidth="1.3" />
      <circle cx="2" cy="6" r="2.3" strokeWidth="1.3" />
      <path d="m7 3 3 9M4 7l12 2" strokeWidth="1.8" />
    </g>
  ),
};

const TOOL_GROUPS = [["Select", "Cursor"], ["Move", "Rotate", "Scale", "Transform"], ["Annotate", "Measure"], ["Add Cube", "Knife"]];
const HAS_MORE = ["Select", "Scale", "Annotate", "Add Cube", "Knife"];

function Viewport() {
  const [tool, setTool] = useState("Select");

  return (
    <main className="relative flex min-w-0 flex-col overflow-hidden rounded-md bg-[#1c1c18]">
      <header className="flex h-[27px] shrink-0 items-center justify-between bg-[#2b2b2b] pr-2">
        <div className="flex gap-[6px]">
          <HeaderSelect icon="axes" label="Orientation" options={["Global", "Local"]} className="w-[74px] bg-[#242424]" />
          <Group>
            <Btn icon="link" label="Pivot" />
            <Btn icon="down" label="Pivot options" className="-mx-1" />
          </Group>
          <Group>
            <Btn icon="magnetOff" label="Snap" className="bg-[#545454] text-neutral-400" />
            <Btn icon="snapGrid" label="Snap to" className="ml-px" />
            <Btn icon="down" label="Snap options" className="-mx-1" />
          </Group>
          <Group>
            <Btn icon="proportional" label="Proportional" className="bg-[#545454]" />
            <Btn icon="falloff" label="Falloff" className="text-neutral-600" />
            <Btn icon="down" label="Falloff options" className="-mx-1 text-neutral-600" />
          </Group>
        </div>
        <div className="flex gap-[5px]">
          <Group>
            <Btn icon="eye" label="Visibility" />
            <Btn icon="down" label="Visibility options" className="-mx-1" />
          </Group>
          <Group>
            <Btn icon="gizmo" label="Gizmos" className="bg-[#4772b3]" />
            <Btn icon="down" label="Gizmo options" />
          </Group>
          <Group>
            <Btn icon="overlay" label="Overlays" className="bg-[#545454]" />
            <Btn icon="down" label="Overlay options" className="text-neutral-600" />
          </Group>
          <Group>
            <Btn icon="xray" label="X-ray" className="bg-[#545454]" />
          </Group>
          <Group>
            <Btn icon="wire" label="Wireframe" className="bg-[#545454] text-neutral-400" />
            <Btn icon="solid" label="Solid" className="bg-[#4772b3] text-[#dfe8f7]" />
            <Btn icon="preview" label="Material preview" className="border-r border-[#444] bg-[#545454] text-neutral-400" />
            <Btn icon="rendered" label="Rendered" className="bg-[#545454] text-neutral-400" />
            <Btn icon="down" label="Shading options" />
          </Group>
          <Group>
            <Btn icon="display" label="Viewport display" className="bg-[#4772b3]" />
            <Btn icon="down" label="Display options" />
          </Group>
        </div>
      </header>
      <div className="flex items-start justify-between">
        <div className="flex h-[25px] w-28 rounded-br bg-[#2b2b2b] pt-[2px] pl-2">
          <Group className="h-5">
            <Btn icon="selNew" label="Set" className="bg-[#4772b3]" />
            <Btn icon="selAdd" label="Extend" className="border-l border-[#444] bg-[#545454] text-neutral-300" />
            <Btn icon="selSub" label="Subtract" className="border-l border-[#444] bg-[#545454] text-neutral-300" />
            <Btn icon="selXor" label="Difference" className="border-l border-[#444] bg-[#545454] text-neutral-300" />
            <Btn icon="selAnd" label="Intersect" className="border-l border-[#444] bg-[#545454] text-neutral-300" />
          </Group>
        </div>
        <div className="h-[25px] rounded-bl bg-[#2b2b2b] pt-[2px] pr-2 pl-2">
          <button className="flex h-5 w-[67px] items-center justify-between rounded border border-[#3d3d3d] bg-[#242424] pl-[6px]">
            Options
            <Icon name="down" className="size-[13px]" />
          </button>
        </div>
      </div>

      <div className="relative flex w-10 flex-col gap-[6px] self-start pt-2 pl-2">
        {TOOL_GROUPS.map((group) => (
          <div key={group[0]} className="w-10 overflow-hidden rounded border border-[#3a3a3a] bg-[#262626]">
            {group.map((t) => (
              <button
                key={t}
                aria-label={t}
                onClick={() => setTool(t)}
                className={clsx(
                  "relative flex h-[34px] w-full items-center justify-center border-b border-[#3a3a3a] last:border-b-0",
                  tool === t && "bg-[#4772b3]"
                )}
              >
                <svg viewBox="0 0 24 24" className="size-6 overflow-visible" fill="none" stroke="#e6e6e6">
                  {TOOLS[t]}
                </svg>
                {HAS_MORE.includes(t) && (
                  <svg viewBox="0 0 4 4" className="absolute right-[2px] bottom-[2px] size-1" fill="#999">
                    <path d="M4 0v4H0Z" />
                  </svg>
                )}
              </button>
            ))}
          </div>
        ))}
      </div>

      <BevelMesh />
      <AxisGizmo />
      <div className="absolute top-[145px] right-[11px] flex flex-col gap-[6px]">
        {["zoom", "hand", "camera", "gridView"].map((n) => (
          <button key={n} aria-label={n} className="flex size-6 items-center justify-center rounded-full bg-[#171714]">
            <Icon name={n} className="size-4" />
          </button>
        ))}
      </div>
      <Icon name="down" className="absolute top-[76px] right-[-2px] size-[14px] rotate-90 text-neutral-300" />
    </main>
  );
}

const TAB_GROUPS = [
  [{ icon: "tools", color: "text-neutral-400" }],
  [
    { icon: "render", color: "text-neutral-200" },
    { icon: "output", color: "text-neutral-400" },
    { icon: "viewLayer", color: "text-neutral-400" },
    { icon: "scene", color: "text-neutral-400" },
    { icon: "world", color: "text-[#b0505c]" },
  ],
  [{ icon: "collection", color: "text-neutral-200" }],
  [
    { icon: "object", color: "text-[#c9844a]" },
    { icon: "wrench", color: "text-[#5a80d6]" },
    { icon: "particles", color: "text-[#5a80d6]" },
    { icon: "physics", color: "text-[#5a80d6]" },
    { icon: "constraint", color: "text-[#5a80d6]" },
    { icon: "meshData", color: "text-[#00c28a]" },
    { icon: "material", color: "text-[#b0505c]" },
  ],
];

function SideColumn() {
  return (
    <aside className="flex min-w-0 flex-col gap-[3px] overflow-hidden">
      <section className="h-[270px] shrink-0 overflow-hidden rounded-l-md bg-[#222]">
        <header className="flex h-[27px] items-center bg-[#2b2b2b] pl-2">
          <Group className="w-12 bg-[#222] pl-1">
            <Icon name="outliner" className="size-[15px]" />
            <Icon name="down" className="size-3" />
          </Group>
        </header>
        <div className="flex h-5 items-center bg-[#222] pl-6">
          <Icon name="collection" className="size-[15px]" />
        </div>
        <div className="h-5 bg-[#1f1f1f]" />
        <div className="flex h-5 items-center bg-[#222] pl-[25px]">
          <Icon name="down" className="size-4" />
        </div>
        <div className="h-5 bg-[#1f1f1f] pl-[30px]">
          <div className="mt-1 h-3 w-px bg-neutral-600" />
        </div>
        {[0, 1, 2, 3, 4, 5, 6].map((n) => (
          <div key={n} className="h-5 odd:bg-[#222] even:bg-[#1f1f1f]" />
        ))}
      </section>
      <section className="flex min-h-0 flex-1 flex-col overflow-hidden rounded-l-md bg-[#1c1c1c]">
        <header className="flex h-[26px] shrink-0 items-center bg-[#2b2b2b] pl-2">
          <Group className="w-12 bg-[#222] pl-1">
            <Icon name="props" className="size-4" />
            <Icon name="down" className="size-3" />
          </Group>
        </header>
        <div className="flex flex-1">
          <nav className="flex w-7 shrink-0 flex-col gap-[10px] pt-2 pl-[2px]">
            {TAB_GROUPS.map((group, i) => (
              <div key={i} className="flex flex-col gap-[2px]">
                {group.map((t) => (
                  <button
                    key={t.icon}
                    aria-label={t.icon}
                    className={clsx("flex h-[26px] items-center justify-center rounded-l", t.color, t.icon === "render" && "bg-[#2b2b2b]")}
                  >
                    <Icon name={t.icon} className="size-4" />
                  </button>
                ))}
              </div>
            ))}
          </nav>
          <div className="flex-1 bg-[#303030]" />
        </div>
      </section>
    </aside>
  );
}

const WORKSPACES = [
  "Layout",
  "Sculpting",
  "UV Editing",
  "Texture Paint",
  "Shading",
  "Animation",
  "Rendering",
  "Compositing",
  "Geometry Nodes",
  "Scripting",
  "Lighting",
];

export default function App() {
  return (
    <div className="flex h-screen flex-col overflow-hidden bg-[#181818] font-[Inter,sans-serif] text-xs text-[#e0e0e0]">
      <nav className="flex h-[6px] shrink-0 items-end overflow-hidden pl-[253px] text-[11px] leading-[18px] whitespace-nowrap text-neutral-400">
        {WORKSPACES.map((w) => (
          <button key={w} className={clsx("px-[11px]", w === "Geometry Nodes" && "bg-[#2b2b2b] text-white")}>
            {w}
          </button>
        ))}
        <div className="mb-[3px] ml-auto h-5 w-16 rounded-bl border border-[#3d3d3d] bg-[#1d1d1d]" />
      </nav>

      <div className="grid min-h-0 flex-1 grid-cols-[minmax(0,893fr)_minmax(0,543fr)_33px] gap-[3px]">
        <div className="grid min-w-0 grid-rows-[minmax(0,546fr)_minmax(0,404fr)] gap-[3px]">
          <section className="flex min-w-0 flex-col overflow-hidden rounded-md">
            <header className="flex h-[26px] shrink-0 items-center bg-black text-[11px]">
              <EditorType icon="nodesMod" />
              <HeaderSelect label="Node tree type" options={["Modifier", "Tool"]} className="mr-3 ml-[5px] w-[79px]" />
              <Menus />
              <div className="ml-10">
                <DataBlock icon="nodeTree" name="Geometry Nodes" width="w-[104px]" />
              </div>
              <HeaderToggles />
            </header>
            <GeometryCanvas />
          </section>
          <section className="flex min-w-0 flex-col overflow-hidden rounded-md">
            <header className="flex h-[26px] shrink-0 items-center bg-black text-[11px]">
              <EditorType icon="shaderBall" />
              <HeaderSelect icon="object" label="Shader type" options={["Object", "World"]} className="mr-3 ml-[5px] w-[91px]" />
              <Menus />
              <label className="ml-[13px] flex items-center gap-[4px]">
                <input type="checkbox" defaultChecked className="size-[13px] accent-[#4772b3]" />
                Use Nodes
              </label>
              <HeaderSelect label="Slot" options={["Slot 1", "Slot 2"]} className="mr-[5px] ml-8 w-20" />
              <DataBlock icon="material" name="Material" width="w-20" />
              <HeaderToggles />
            </header>
            <ShaderCanvas />
          </section>
        </div>
        <Viewport />
        <SideColumn />
      </div>

      <footer className="flex h-2 shrink-0 items-start justify-between overflow-hidden pt-px pl-4 text-[11px] leading-[18px] whitespace-nowrap text-neutral-500">
        <span>Options</span>
        <span className="w-[209px]">Duration: 00:10+10 (Frame 11/250) | Memory</span>
      </footer>
    </div>
  );
}
